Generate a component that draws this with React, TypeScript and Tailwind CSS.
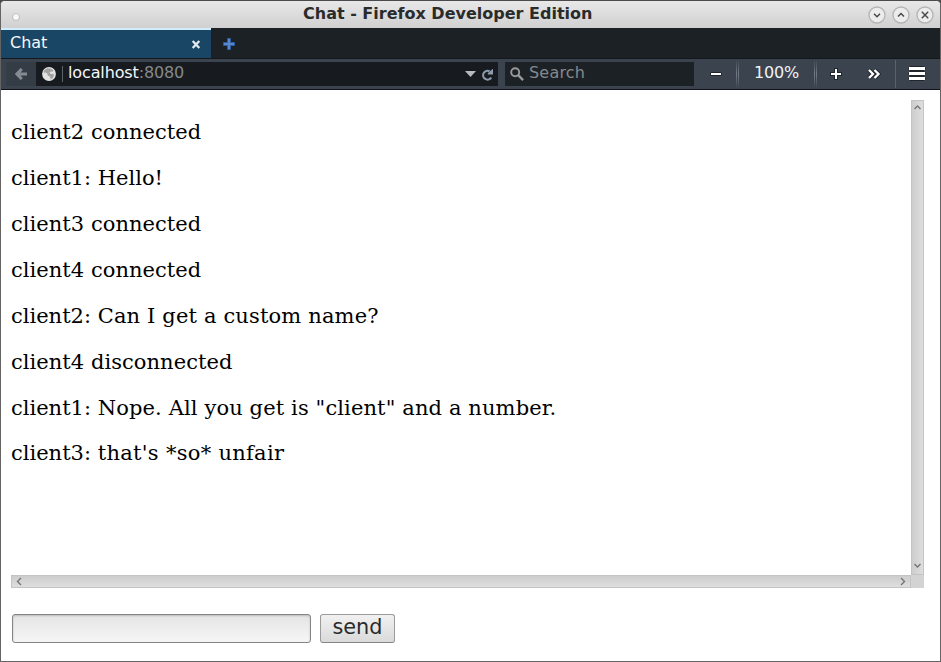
import React from "react";

const messages = [
  { text: "client2 connected", tracking: "tracking-[0.04px]" },
  { from: "client1: ", text: "Hello!", tracking: "tracking-[0px]" },
  { text: "client3 connected", tracking: "tracking-[0.04px]" },
  { text: "client4 connected", tracking: "tracking-[0.04px]" },
  { from: "client2: ", text: "Can I get a custom name?", tracking: "tracking-[0.15px]" },
  { text: "client4 disconnected", tracking: "tracking-[0.045px]" },
  { from: "client1: ", text: 'Nope. All you get is "client" and a number.', tracking: "tracking-[0.12px]" },
  { from: "client3: ", text: "that's *so* unfair", tracking: "tracking-[0.29px]" },
];

function WindowButton({ d, label }: { d: string; label: string }) {
  return (
    <button aria-label={label} className="block h-[18px] w-[18px]">
      <svg width="18" height="18" viewBox="0 0 18 18" fill="none">
        <circle cx="9" cy="9" r="8" fill="#ececec" stroke="#b6b6b6" strokeWidth="1.4" />
        <path d={d} stroke="#4a4a4a" strokeWidth="1.5" />
      </svg>
    </button>
  );
}

function TitleBar() {
  return (
    <header className="flex h-[27px] items-center bg-gradient-to-b from-[#e8e8e8] to-[#d0d0d0] pr-[6px] pl-[11px]">
      <span className="mt-[5px] h-2 w-2 rounded-full border border-[#bdbdbd] bg-[#f8f8f8]" />
      <h1 className="ml-[283px] w-[400px] self-start text-[16px] leading-[25px] font-bold whitespace-nowrap text-[#2b2b2b]">
        Chat - Firefox Developer Edition
      </h1>
      <div className="ml-auto flex gap-[6px]">
        <WindowButton label="Minimize" d="M6 7.8l3 3 3-3" />
        <WindowButton label="Maximize" d="M6 10.5l3-3 3 3" />
        <WindowButton label="Close" d="M5.8 5.8l6.4 6.4M12.2 5.8l-6.4 6.4" />
      </div>
    </header>
  );
}

function TabStrip() {
  return (
    <div className="flex h-[31px] border-b border-[#14181b] bg-[#1c2126]">
      <div className="flex w-[210px] justify-between border-t-2 border-[#d1edff] bg-[#1a4666] pr-[10px] pl-[9px]">
        <span className="text-[16px] leading-[25px] text-[#f5f7fa]">Chat</span>
        <svg className="mt-[10px]" width="10" height="9" viewBox="0 0 10 9" fill="none">
          <path d="M1.7 1l6.6 7M8.3 1l-6.6 7" stroke="#e2eaf0" strokeWidth="2.3" />
        </svg>
      </div>
      <svg className="mt-[10px] ml-[12px]" width="12" height="12" viewBox="0 0 12 12">
        <path d="M4.5 .5h3v4h4v3h-4v4h-3v-4h-4v-3h4z" fill="#5688cf" stroke="#305a99" strokeWidth="1" />
      </svg>
    </div>
  );
}

function Divider() {
  return (
    <span className="flex h-[28px] gap-px self-center">
      <i className="w-px bg-gradient-to-b from-[#3e4652] via-[#737c86] to-[#3e4652]" />
      <i className="w-px bg-gradient-to-b from-[#3e4652] via-[#737c86] to-[#3e4652]" />
    </span>
  );
}

function Toolbar() {
  return (
    <div className="flex h-[31px] border-b border-[#14121c] bg-[#3b434f] pt-[3px] pl-[5px] text-[16px]">
      <div className="flex h-[24px] w-[30px] items-center justify-center bg-[#343c45]">
        <svg width="12" height="12" viewBox="0 0 12 12" fill="none">
          <path d="M6.8 .9L1.9 6l4.9 5.1M2 6h10" stroke="#858b92" strokeWidth="3" />
        </svg>
      </div>
      <div className="flex h-[24px] w-[462px] items-center bg-[#171b1f] pr-[4px] pl-[6px]">
        <svg width="14" height="14" viewBox="0 0 14 14">
          <circle cx="7" cy="7" r="6.9" fill="#e2e2e2" />
          <path d="M5.5 1.2l3 .3 2.8 1.7-.6 1.6-1.9-.4-1.3 1.4L9 7l2.2-.3 1 1.5-1.6 3-2 1.2-.6-2.6-2.3-1.2-.5-2L3 5.2 2 6.5 1.6 4l2-2z" fill="#a2a2a2" />
        </svg>
        <i className="ml-[6px] h-[16px] w-px bg-[#5b6268]" />
        <span className="ml-[5px] self-start leading-[21px] tracking-[-0.13px] text-[#85898c]">
          <b className="font-normal text-[#f5f7fa]">localhost</b>:8080
        </span>
        <svg className="ml-auto" width="11" height="6" viewBox="0 0 11 6">
          <path d="M0 0h11L5.5 6z" fill="#b6babf" />
        </svg>
        <svg className="ml-[5px]" width="13" height="13" viewBox="0 0 13 13" fill="none">
          <path d="M10.2 9.6A4.4 4.4 0 1 1 8.6 3.3" stroke="#8c9aab" strokeWidth="2.1" />
          <path d="M12 .8v5.8H6.8V5.2L9.8 2.6z" fill="#8c9aab" />
        </svg>
      </div>
      <div className="ml-[7px] flex h-[24px] w-[189px] items-center bg-[#1c2126] pl-[5px]">
        <svg width="14" height="14" viewBox="0 0 14 14" fill="none" stroke="#999">
          <circle cx="5.2" cy="5.2" r="4" strokeWidth="1.9" />
          <path d="M8.2 8.2l4.9 4.9" strokeWidth="2.4" />
        </svg>
        <span className="ml-[5px] self-start leading-[21px] tracking-[0.2px] text-[#84898d]">Search</span>
      </div>
      <div className="-mt-[3px] flex h-[30px] w-[246px]">
        <svg className="mt-[13px] mr-[14px] ml-[16px] shrink-0" width="12" height="4" viewBox="0 0 12 4">
          <path d="M.5 .5h11v3H.5z" fill="#fff" stroke="#20252b" strokeWidth="1" />
        </svg>
        <Divider />
        <span className="w-[75px] text-center leading-[27px] tracking-[-0.2px] text-[#f0f2f4]">100%</span>
        <Divider />
        <svg className="mt-[9px] ml-[13px] shrink-0" width="12" height="12" viewBox="0 0 12 12" fill="none">
          <path d="M6 0v12M0 6h12" stroke="#20252b" strokeWidth="4" />
          <path d="M6 1v10M1 6h10" stroke="#fff" strokeWidth="2" />
        </svg>
        <svg className="mt-[9px] ml-[25px] shrink-0" width="14" height="12" viewBox="0 0 14 12" fill="none">
          <path d="M2 2l4 4-4 4M7.5 2l4 4-4 4" stroke="#20252b" strokeWidth="4" />
          <path d="M2 2l4 4-4 4M7.5 2l4 4-4 4" stroke="#fff" strokeWidth="2.3" />
        </svg>
        <i className="mt-px ml-[14px] h-[28px] w-px bg-[#59616b]" />
        <svg className="mt-[7px] ml-[12px] shrink-0" width="18" height="16" viewBox="0 0 18 16">
          <g fill="#fff" stroke="#20252b" strokeWidth="1">
            <rect x=".5" y=".5" width="17" height="4" rx="1" />
            <rect x=".5" y="5.5" width="17" height="4" rx="1" />
            <rect x=".5" y="10.5" width="17" height="4" rx="1" />
          </g>
        </svg>
      </div>
    </div>
  );
}

function Arrow({ d }: { d: string }) {
  return (
    <svg width="9" height="9" viewBox="0 0 9 9" fill="none">
      <path d={d} stroke="#757575" strokeWidth="1.4" />
    </svg>
  );
}

function ChatLog() {
  return (
    <div className="grid h-[488px] w-[913px] grid-cols-[900px_13px] grid-rows-[475px_13px]">
      <div className="flex flex-col gap-[20.88px] overflow-hidden pt-[20.3px] font-['DejaVu_Serif',serif] text-[21px] leading-[25px] text-black">
        {messages.map((m) => (
          <p key={m.text} className="whitespace-pre">
            {m.from}
            <span className={m.tracking}>{m.text}</span>
          </p>
        ))}
      </div>
      <div className="flex flex-col items-center justify-between border border-[#c3c5c5] bg-gradient-to-r from-[#cdcdcd] to-[#dedede] pt-[2px] pb-[4px]">
        <Arrow d="M1.5 6l3-3 3 3" />
        <Arrow d="M1.5 3l3 3 3-3" />
      </div>
      <div className="flex items-center justify-between border border-[#c3c5c5] bg-gradient-to-b from-[#cdcdcd] to-[#dedede] pr-[3px] pl-[3px]">
        <Arrow d="M6 1L2.5 4.5 6 8" />
        <Arrow d="M3 1l3.5 3.5L3 8" />
      </div>
      <div className="bg-[#d3d3d3]" />
    </div>
  );
}

export default function App() {
  return (
    <div className="h-[662px] w-[941px] bg-[#4b494b] font-['DejaVu_Sans',sans-serif]">
      <div className="h-full overflow-hidden rounded-t-[5px] border border-[#646464] border-t-[#4b494b] bg-white">
        <TitleBar />
        <TabStrip />
        <Toolbar />
        <main className="pt-[10px] pl-[10px]">
          <ChatLog />
          <form className="mt-[26px] ml-px flex gap-[9px]" onSubmit={(e) => e.preventDefault()}>
            <input
              aria-label="Message"
              className="h-[29px] w-[299px] rounded-[3px] border border-[#858585] bg-gradient-to-b from-[#e4e4e4] to-[#f6f6f6] px-2 text-[20px] shadow-[inset_0_1px_2px_#bbb] outline-none"
            />
            <button className="h-[29px] w-[75px] rounded-[3px] border border-[#9b9b9b] border-b-[#858585] bg-gradient-to-b from-[#f1f1f1] to-[#dadada] pb-[3px] text-[20.8px] leading-[24px] text-[#2b2b2b]">
              send
            </button>
          </form>
        </main>
      </div>
    </div>
  );
}
